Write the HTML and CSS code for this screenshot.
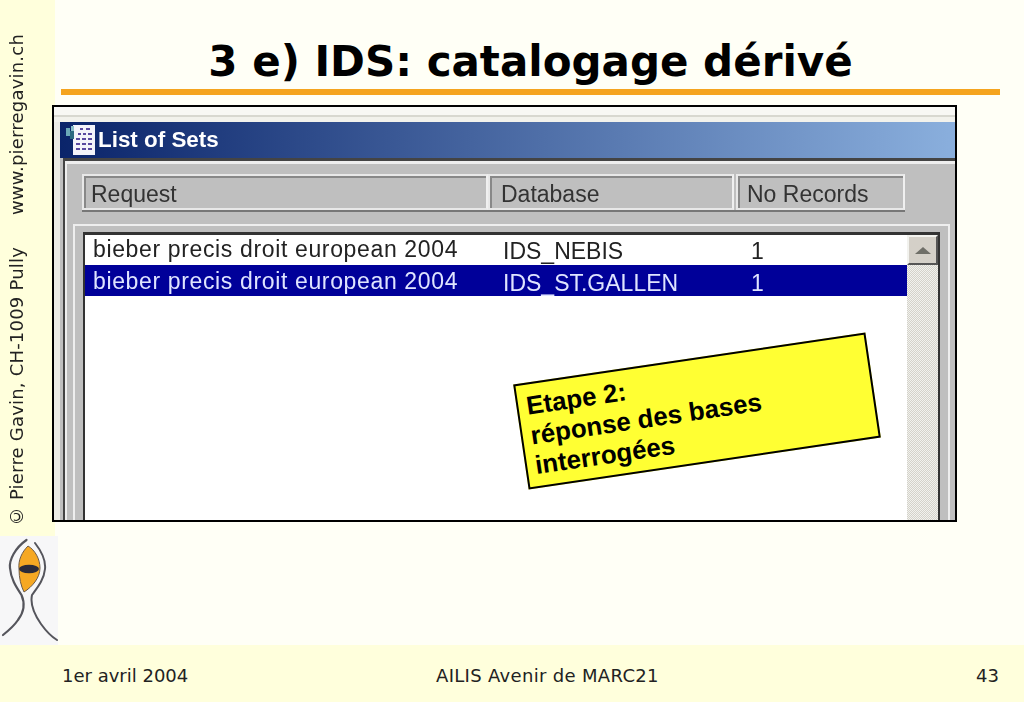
FILE: index.html
```html
<!DOCTYPE html>
<html lang="fr">
<head>
<meta charset="utf-8">
<title>3 e) IDS: catalogage dérivé</title>
<link rel="stylesheet" href="styles.css">
</head>
<body>
<div class="slide">
  <div class="upper">
    <aside class="aside">
      <div class="strip">
        <span class="strip-text">© Pierre Gavin, CH-1009 Pully</span>
        <span class="strip-text">www.pierregavin.ch</span>
      </div>
      <div class="logo">
        <svg width="58" height="108" viewBox="0 0 58 108">
          <path d="M28 10C22 16 18 24 19 33C19 42 21 50 24 56C32 51 40 42 40 32C40 23 35 14 28 10Z" fill="#f6a823" stroke="#6b5a4a" stroke-width="1"/>
          <ellipse cx="29" cy="33" rx="10" ry="4.2" fill="#2b2b3a"/>
          <path d="M26.5 4C15 12 9 24 10 32C11 44 17 52 21.5 59C25 67 24 76 18 84C14 90 8 95 3 99" fill="none" stroke="#55555c" stroke-width="2.2" stroke-linecap="round"/>
          <path d="M35 7C42 16 46 24 45 33C44 44 37 52 32 59C30 68 34 78 41 88C46 95 52 101 57 104" fill="none" stroke="#55555c" stroke-width="2" stroke-linecap="round"/>
        </svg>
      </div>
    </aside>
    <main class="main">
      <header class="heading">
        <h1 class="title">3 e) IDS: catalogage dérivé</h1>
      </header>
      <section class="window">
        <div class="window-top"></div>
        <div class="frame">
          <div class="titlebar">
            <svg class="app-icon" width="30" height="32" viewBox="0 0 30 32">
              <rect x="8" y="1" width="22" height="30" fill="#f4f4fa"/>
              <path d="M15 5h3M21 5h4M13 10h3M18 10h3M23 10h4M11 15h4M17 15h4M23 15h4M11 20h4M17 20h4M23 20h4M11 25h4M17 25h4M23 25h4" stroke="#5a4aa0" stroke-width="2.2"/>
              <path d="M1 4h4v8H1z" fill="#6aa8b8"/>
              <path d="M6 2h3v6H6z" fill="#8cc0c8"/>
              <path d="M5 7h4v8H5z" fill="#2d6a80"/>
            </svg>
            <span class="titlebar-text">List of Sets</span>
          </div>
          <div class="panel">
            <div class="columns">
              <div class="column column-request">Request</div>
              <div class="column column-database">Database</div>
              <div class="column column-records">No Records</div>
            </div>
            <div class="group">
              <div class="list">
                <div class="rows">
                  <div class="row"><span class="cell-request">bieber precis droit european 2004</span><span class="cell">IDS_NEBIS</span><span class="cell">1</span></div>
                  <div class="row row-selected"><span class="cell-request">bieber precis droit european 2004</span><span class="cell">IDS_ST.GALLEN</span><span class="cell">1</span></div>
                </div>
                <div class="scrollbar">
                  <div class="scroll-button"><span class="scroll-arrow"></span></div>
                  <div class="scroll-track"></div>
                </div>
              </div>
            </div>
          </div>
        </div>
      </section>
      <div class="note">Etape 2:<br>réponse des bases<br>interrogées</div>
    </main>
  </div>
  <footer class="footer">
    <span>1er avril 2004</span>
    <span class="footer-center">AILIS Avenir de MARC21</span>
    <span>43</span>
  </footer>
</div>
</body>
</html>
```
FILE: styles.css
```css
* { box-sizing: border-box; }
html, body { margin: 0; padding: 0; }
body { background: #fffff6; font-family: "DejaVu Sans", sans-serif; }
.slide { width: 1024px; height: 702px; display: flex; flex-direction: column; overflow: hidden; }
.upper { flex: 1; display: flex; min-height: 0; }

.aside { width: 58px; flex: none; display: flex; flex-direction: column; }
.strip { width: 55px; height: 536px; background: #ffffdc; display: flex; flex-direction: column-reverse; align-items: flex-start; padding: 0 0 9px 6px; gap: 32px; }
.strip-text { writing-mode: vertical-rl; transform: rotate(180deg); font-size: 18px; letter-spacing: 0.2px; line-height: 21px; color: #222; white-space: nowrap; }
.logo { height: 109px; background: #f7f7f8; }
.logo svg { display: block; }

.main { flex: 1; position: relative; }
.heading { margin-left: 3px; margin-right: 24px; height: 95px; border-bottom: 6px solid #f5a41e; display: flex; align-items: center; justify-content: center; padding-top: 35px; }
.title { margin: 0; font-size: 42px; line-height: 48px; font-weight: bold; color: #000; white-space: nowrap; }

.window { margin: 10px 0 0 -6px; width: 905px; height: 417px; border: 2px solid #000; background: #ecece6; display: flex; flex-direction: column; overflow: hidden; font-family: "Liberation Sans", sans-serif; }
.window-top { height: 15px; flex: none; background: linear-gradient(#f8f8f4 0 8px, #d8d8d0 8px 10px, #f2f2ec 10px); }
.frame { flex: 1; min-height: 0; margin-left: 6px; display: flex; flex-direction: column; background: #bfbfbf; filter: blur(0.35px); }
.titlebar { height: 36px; flex: none; display: flex; align-items: center; gap: 3px; padding-left: 5px; background: linear-gradient(90deg, #0a246a, #8aafdd); }
.titlebar-text { color: #fff; font-weight: bold; font-size: 22.4px; }
.app-icon { flex: none; }

.panel { flex: 1; min-height: 0; margin-left: 3px; border-top: 3px solid #444; border-left: 2px solid #444; display: flex; flex-direction: column; padding-top: 13px; box-shadow: inset 2px 3px 0 #eee; }
.columns { display: flex; flex: none; height: 38px; margin-left: 17px; margin-right: 50px; border-bottom: 2px solid #777; }
.column { height: 36px; border: 2px solid #e8e8e8; border-right-color: #f0f0f0; box-shadow: inset 2px 2px 0 #888; padding-left: 7px; font-size: 23px; line-height: 37px; color: #333; }
.column-request { width: 406px; }
.column-database { width: 246px; padding-left: 11px; }
.column-records { width: 169px; margin-left: 2px; padding-left: 9px; }

.group { flex: 1; min-height: 0; margin: 12px 5px 0 8px; border-top: 2px solid #eee; border-left: 2px solid #eee; border-right: 2px solid #eee; padding: 6px 8px 0 8px; display: flex; }
.list { flex: 1; display: flex; background: #fff; border-top: 3px solid #333; border-left: 2px solid #333; border-right: 2px solid #333; }
.rows { flex: 1; }
.row { display: grid; grid-template-columns: 410px 248px 1fr; height: 30px; padding-left: 8px; font-size: 23px; line-height: 29px; color: #222; white-space: nowrap; }
.row-selected { height: 31px; background: #000099; color: #dfe4ff; line-height: 33px; }
.cell-request { letter-spacing: 0.64px; }
.cell { padding-top: 2px; }
.scrollbar { width: 31px; flex: none; display: flex; flex-direction: column; }
.scroll-button { height: 30px; flex: none; background: #d4d0c8; border: 2px solid #f2f2ee; border-right-color: #555; border-bottom-color: #555; display: flex; align-items: center; justify-content: center; }
.scroll-arrow { width: 0; height: 0; border-left: 8px solid transparent; border-right: 8px solid transparent; border-bottom: 7px solid #6f6f68; }
.scroll-track { flex: 1; background: repeating-conic-gradient(#d4d2ca 0 25%, #f2f2ee 0 50%) 0 0 / 2px 2px; }

.note { position: absolute; left: 461px; top: 358px; width: 356px; height: 106px; padding: 6px 8px; transform: rotate(-8.4deg); background: #ffff33; border: 2px solid #000; font-family: "Liberation Sans", sans-serif; font-weight: bold; font-size: 25.9px; line-height: 30px; color: #000; white-space: nowrap; }

.footer { height: 57px; flex: none; background: #ffffdc; display: grid; grid-template-columns: 374px auto 1fr; align-items: center; padding: 4px 25px 0 62px; font-size: 18px; color: #222; }
.footer span:last-child { justify-self: end; }
.footer-center { letter-spacing: 0.32px; }
```
